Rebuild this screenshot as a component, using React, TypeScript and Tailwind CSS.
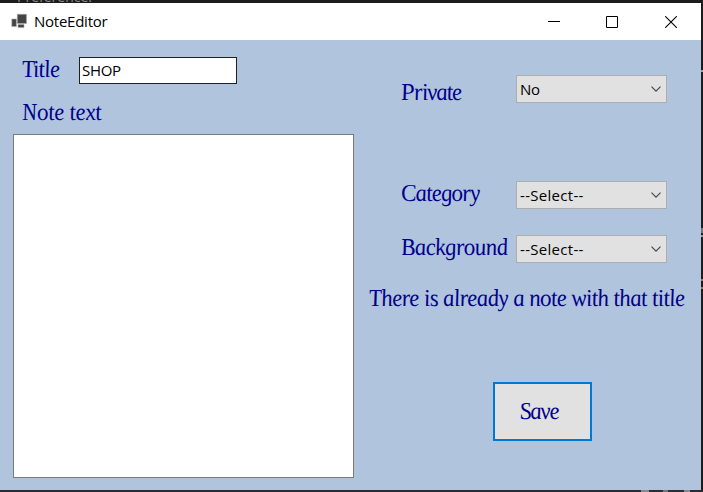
import type { ReactNode } from "react";

const uiFont = "font-['Open_Sans','Noto_Sans',sans-serif]";
const scriptFont = "font-['Liberation_Serif',serif]";

function Label({ children, className = "" }: { children: ReactNode; className?: string }) {
  return (
    <div className={`h-[30px] shrink-0 whitespace-nowrap leading-[30px] ${className}`}>
      <span className={`${scriptFont} ml-px inline-block origin-[0_23px] scale-y-[1.06] skew-x-[8deg] text-[23px] italic text-[#00008b]`}>
        {children}
      </span>
    </div>
  );
}

function Combo({ value, className = "" }: { value: string; className?: string }) {
  return (
    <div
      className={`${uiFont} flex h-7 w-[151px] shrink-0 items-center justify-between border border-[#adadad] bg-[#e1e1e1] pl-[3px] pr-[5px] text-[15px] leading-5 text-black`}
    >
      <span className={`pb-px ${className}`}>{value}</span>
      <svg width="10" height="6" viewBox="0 0 10 6" fill="none" stroke="#444" strokeWidth="1.1">
        <path d="M0.5 0.7 5 5.2 9.5 0.7" />
      </svg>
    </div>
  );
}

function TitleBar() {
  return (
    <header className="flex h-[37px] items-center bg-white pl-[11px]">
      <svg width="17" height="16" viewBox="0 0 17 16" className="-mt-px mr-[6px]" fill="#444" stroke="#aaa" strokeWidth="0.6">
        <path d="M6.3 1.3h9.2v9.2H6.3zM0.8 6h4.6v7.6H0.8zM7 11.5h6v3H7z" />
      </svg>
      <h1 className={`${uiFont} pb-[2px] text-[15px] leading-5 tracking-[-0.25px] text-black`}>NoteEditor</h1>
      <div className="ml-auto flex items-center pr-6">
        <svg width="12" height="12" viewBox="0 0 12 12" stroke="#000">
          <path d="M0 5.5h12" />
        </svg>
        <svg width="12" height="12" viewBox="0 0 12 12" fill="none" stroke="#000" className="ml-[46px] mr-[47px]">
          <path d="M.5.5h11v11H.5z" />
        </svg>
        <svg width="12" height="12" viewBox="0 0 12 12" stroke="#000" strokeWidth="1.1">
          <path d="m.2.2 11.6 11.6M11.8.2.2 11.8" />
        </svg>
      </div>
    </header>
  );
}

export default function App() {
  return (
    <div className="relative h-[492px] w-[703px] overflow-hidden bg-[#1c1c1c] pt-[3px]">
      <div className={`${uiFont} absolute left-[17px] top-[-13px] text-[14px] leading-5 text-[#8a8a8a]`}>Preference.</div>
      <div className="absolute bottom-0 left-0 h-0.5 w-full bg-[#2d2d30]" />
      <div className="absolute bottom-0 left-[641px] h-0.5 w-2 bg-[#8a8a8a]" />
      <div className="absolute bottom-0 left-[663px] h-0.5 w-[5px] bg-[#777]" />
      <div className="absolute bottom-0 left-[684px] h-0.5 w-[6px] bg-[#8a8a8a]" />
      <div className="absolute right-0 top-[70px] h-[2px] w-[2px] bg-[#8fa1bd]" />
      <div className="absolute right-0 top-[228px] h-[5px] w-[2px] bg-[#66777f]" />
      <div className="absolute right-0 top-[235px] h-[2px] w-[2px] bg-[#999]" />
      <div className="absolute right-0 top-[279px] h-[2px] w-[2px] bg-[#a66f56]" />
      <div className="absolute right-0 top-[287px] h-[2px] w-[2px] bg-[#a66f56]" />

      <div className="relative h-[487px] w-[701px] bg-[#b0c4de]">
        <TitleBar />
        <main className="flex h-[450px]">
          <section className="w-[354px] shrink-0 pl-[13px] pt-[15px]">
            <div className="flex items-start pl-[9px]">
              <Label className="w-[57px] tracking-[-0.7px]">Title</Label>
              <input
                defaultValue="SHOP"
                className={`${uiFont} mt-[2px] h-[27px] w-[158px] border border-[#202020] bg-white px-[2px] pb-[2px] text-[15px] tracking-[-0.3px] text-black outline-none`}
              />
            </div>
            <Label className="mt-[13px] pl-[9px] tracking-[-0.35px]">Note text</Label>
            <textarea className="mt-[6px] block h-[344px] w-[341px] resize-none border border-[#7a7a7a] bg-white outline-none" />
          </section>
          <section className="flex flex-1 flex-col pl-[15px] pt-[35px]">
            <div className="flex items-start pl-8">
              <Label className="mt-[3px] w-[115px] tracking-[-1.1px]">Private</Label>
              <Combo value="No" className="tracking-[-0.3px]" />
            </div>
            <div className="mt-[71px] flex items-start pl-8">
              <Label className="w-[115px] tracking-[-0.9px]">Category</Label>
              <div className="pt-[2px]">
                <Combo value="--Select--" className="tracking-[0.3px]" />
              </div>
            </div>
            <div className="mt-[24px] flex items-start pl-8">
              <Label className="w-[115px] tracking-[-0.5px]">Background</Label>
              <div className="pt-[2px]">
                <Combo value="--Select--" className="tracking-[0.3px]" />
              </div>
            </div>
            <Label className="mt-[21px] tracking-[-0.63px]">There is already a note with that title</Label>
            <button className="ml-[124px] mt-[68px] flex h-[59px] w-[99px] items-start border-2 border-[#0078d7] bg-[#e1e1e1] pl-[25px] pt-[13px]">
              <Label className="tracking-[-1.3px]">Save</Label>
            </button>
          </section>
        </main>
      </div>
    </div>
  );
}
